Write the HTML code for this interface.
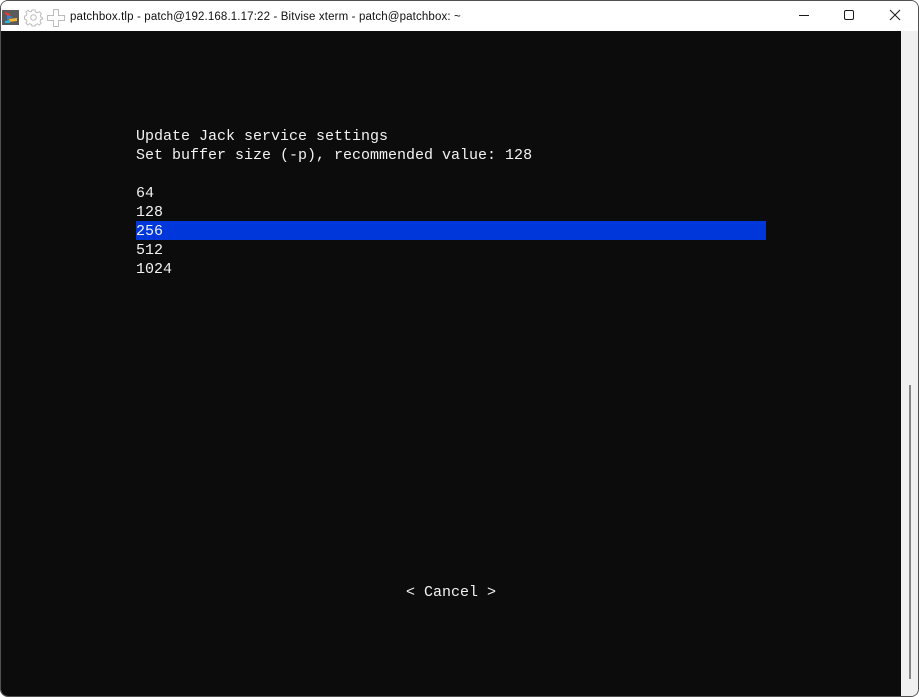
<!DOCTYPE html>
<html>
<head>
<meta charset="utf-8">
<style>
html,body{margin:0;padding:0;width:919px;height:697px;overflow:hidden;background:#fff;}
#win{position:absolute;left:0;top:0;width:917px;height:695px;border:1px solid #505050;border-radius:8px;overflow:hidden;background:#f0f0f0;}
#bar{position:absolute;left:0;top:0;width:917px;height:30px;background:#fff;}
#title{position:absolute;left:69px;top:7px;font:11.5px/18px "Liberation Sans",sans-serif;letter-spacing:.137px;color:#111;white-space:pre;}
#term{position:absolute;left:0;top:30px;width:900px;height:665px;background:#0c0c0c;}
#sb{position:absolute;left:900px;top:30px;width:17px;height:665px;background:#f0f0f0;}
#thumb{position:absolute;left:8px;top:354px;width:2px;height:294px;background:#858585;}
.t{position:absolute;left:135px;font:15px/19px "Liberation Mono",monospace;color:#f2f2f2;white-space:pre;height:19px;}
#sel{position:absolute;left:135px;top:220px;width:630px;height:19px;background:#0037da;}
svg{position:absolute;}
</style>
</head>
<body>
<div id="win">
<div id="bar">
<svg style="left:0;top:0" width="68" height="30" viewBox="0 0 68 30">
<rect x="1" y="9" width="17" height="15" fill="#5a5a5a"/>
<path d="M4 11 L8 12 L10 15 L5 14 Z" fill="#e83a2a"/>
<path d="M6 14 L12 16 L6 19 Z" fill="#3a7fd0"/>
<path d="M8 18 L16 17 L16 20 L7 21 Z" fill="#f2b632"/>
<path d="M4 20 L9 19 L9 22 L4 22 Z" fill="#2bb5d8"/>
<g fill="none" stroke="#bdbdbd" stroke-width="1">
<circle cx="32.5" cy="16.5" r="2.8"/>
<path d="M31 9 L34 9 L34.6 11 L36.6 11.8 L38.4 10.6 L40.4 12.7 L39.2 14.4 L40 16 L41.5 16.5 L41.5 18 L39.6 18.8 L39 20.4 L40.2 22 L38.3 24 L36.6 22.8 L34.8 23.6 L34.2 25 L31 25 L30.4 23.4 L28.6 22.7 L26.8 24 L24.8 22 L26 20.3 L25.2 18.6 L23.5 18 L23.5 15.2 L25.4 14.5 L26 13 L24.9 11.2 L26.8 9.2 L28.5 10.5 L30.4 10.7 Z"/>
<path d="M52.5 8.5 H57.5 V14.5 H63.5 V19.5 H57.5 V25.5 H52.5 V19.5 H46.5 V14.5 H52.5 Z"/>
</g>
</svg>
<div id="title">patchbox.tlp - patch@192.168.1.17:22 - Bitvise xterm - patch@patchbox: ~</div>
<svg style="left:780px;top:0" width="137" height="30" viewBox="0 0 137 30">
<path d="M18 14.5 H28" stroke="#1a1a1a" stroke-width="1" fill="none"/>
<rect x="63.5" y="9.5" width="9" height="9" rx="1.5" stroke="#1a1a1a" stroke-width="1" fill="none"/>
<path d="M109 9 L119 19 M119 9 L109 19" stroke="#1a1a1a" stroke-width="1" fill="none"/>
</svg>
</div>
<div id="term"></div>
<div id="sb"><div id="thumb"></div></div>
<div id="sel"></div>
<div class="t" style="top:126px">Update Jack service settings</div>
<div class="t" style="top:145px">Set buffer size (-p), recommended value: 128</div>
<div class="t" style="top:183px">64</div>
<div class="t" style="top:202px">128</div>
<div class="t" style="top:221px">256</div>
<div class="t" style="top:240px">512</div>
<div class="t" style="top:259px">1024</div>
<div class="t" style="top:582px;left:405px">&lt; Cancel &gt;</div>
</div>
</body>
</html>
